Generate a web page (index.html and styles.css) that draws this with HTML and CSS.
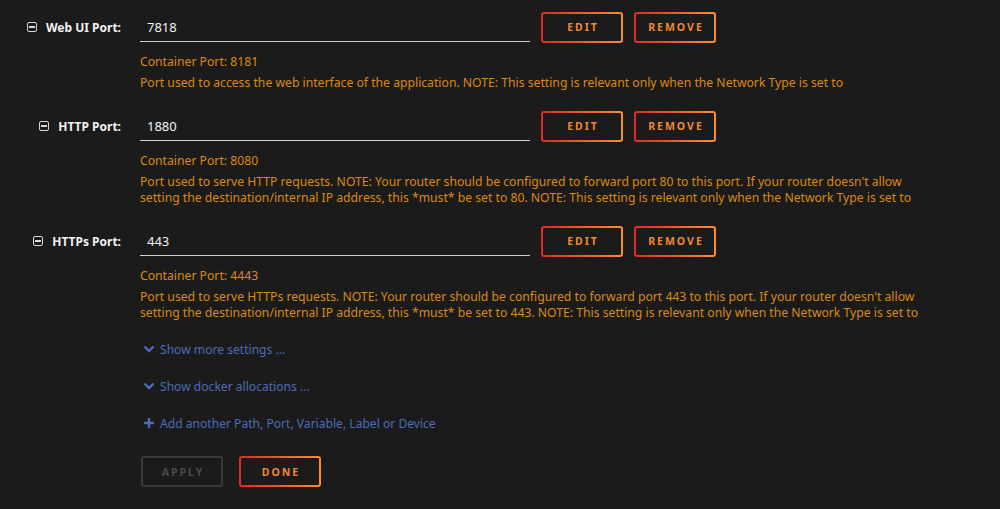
FILE: index.html
```html
<!DOCTYPE html>
<html>
<head>
<meta charset="utf-8">
<link rel="stylesheet" href="styles.css">
</head>
<body>
<div class="page">
  <div class="setting">
    <div class="line">
      <div class="label"><span class="minus"></span>Web UI Port:</div>
      <div class="field"><span class="value">7818</span></div>
      <div class="actions"><button class="btn">EDIT</button><button class="btn">REMOVE</button></div>
    </div>
    <div class="info">
      <div class="cport">Container Port: 8181</div>
      <div class="desc">Port used to access the web interface of the application. NOTE: This setting is relevant only when the Network Type is set to</div>
    </div>
  </div>
  <div class="setting">
    <div class="line">
      <div class="label"><span class="minus"></span>HTTP Port:</div>
      <div class="field"><span class="value">1880</span></div>
      <div class="actions"><button class="btn">EDIT</button><button class="btn">REMOVE</button></div>
    </div>
    <div class="info">
      <div class="cport">Container Port: 8080</div>
      <div class="desc">Port used to serve HTTP requests. NOTE: Your router should be configured to forward port 80 to this port. If your router doesn't allow<br>setting the destination/internal IP address, this *must* be set to 80. NOTE: This setting is relevant only when the Network Type is set to</div>
    </div>
  </div>
  <div class="setting">
    <div class="line">
      <div class="label"><span class="minus"></span>HTTPs Port:</div>
      <div class="field"><span class="value">443</span></div>
      <div class="actions"><button class="btn">EDIT</button><button class="btn">REMOVE</button></div>
    </div>
    <div class="info">
      <div class="cport">Container Port: 4443</div>
      <div class="desc">Port used to serve HTTPs requests. NOTE: Your router should be configured to forward port 443 to this port. If your router doesn't allow<br>setting the destination/internal IP address, this *must* be set to 443. NOTE: This setting is relevant only when the Network Type is set to</div>
    </div>
  </div>
  <div class="links">
    <a class="link"><svg class="ico" viewBox="0 0 12 12"><path d="M1.5 3.5 L6 8 L10.5 3.5" fill="none" stroke="currentColor" stroke-width="2.4"/></svg>Show more settings ...</a>
    <a class="link"><svg class="ico" viewBox="0 0 12 12"><path d="M1.5 3.5 L6 8 L10.5 3.5" fill="none" stroke="currentColor" stroke-width="2.4"/></svg>Show docker allocations ...</a>
    <a class="link"><svg class="ico" viewBox="0 0 12 12"><path d="M6 1 V11 M1 6 H11" fill="none" stroke="currentColor" stroke-width="2.4"/></svg>Add another Path, Port, Variable, Label or Device</a>
  </div>
  <div class="footer">
    <button class="btn disabled">APPLY</button>
    <button class="btn">DONE</button>
  </div>
</div>
</body>
</html>
```

FILE: styles.css
```css
html, body {
  margin: 0;
  padding: 0;
  background: #1c1b1b;
}
body {
  font-family: "Noto Sans", "Open Sans", sans-serif;
  font-size: 12px;
  color: #f2f2f2;
}
.page {
  padding-top: 12px;
}
.setting {
  margin-bottom: 20px;
}
.line {
  display: flex;
  align-items: center;
  height: 30px;
}
.label {
  flex: none;
  width: 121px;
  display: flex;
  justify-content: flex-end;
  align-items: center;
  gap: 9px;
  font-weight: bold;
  font-size: 12px;
  color: #f2f2f2;
}
.minus {
  width: 8px;
  height: 8px;
  border: 1.5px solid #d8d8d8;
  border-radius: 2px;
  position: relative;
  box-sizing: content-box;
  display: inline-block;
}
.minus::after {
  content: "";
  position: absolute;
  left: 1px;
  right: 1px;
  top: 3.25px;
  height: 1.5px;
  background: #d8d8d8;
}
.field {
  flex: none;
  margin-left: 19px;
  width: 390px;
  height: 30px;
  box-sizing: border-box;
  border-bottom: 1px solid #d0d0d0;
  display: flex;
  align-items: center;
  padding-left: 7px;
  font-size: 13px;
  color: #f2f2f2;
}
.actions {
  display: flex;
  gap: 11px;
  margin-left: 11px;
}
.btn {
  width: 82px;
  height: 31px;
  box-sizing: border-box;
  border: 2px solid transparent;
  border-radius: 3px;
  background:
    linear-gradient(#1c1b1b, #1c1b1b) padding-box,
    linear-gradient(90deg, #e22828, #ff8c2f) border-box;
  color: #f08a2e;
  font-family: "Noto Sans", sans-serif;
  font-weight: bold;
  font-size: 10.5px;
  letter-spacing: 2px;
  padding: 0 0 0 2px;
  cursor: pointer;
}
.btn.disabled {
  background: #1c1b1b;
  border-color: #3a3a3a;
  color: #4a4a4a;
}
.info {
  margin-left: 140px;
  color: #da8a10;
  font-size: 12.2px;
  line-height: 16px;
}
.cport {
  margin-top: 12px;
}
.desc {
  margin-top: 5px;
  white-space: nowrap;
}
.links {
  margin-left: 143px;
  display: flex;
  flex-direction: column;
  gap: 21px;
}
.link {
  display: flex;
  align-items: center;
  gap: 5px;
  height: 16px;
  color: #4a6db8;
  font-size: 12.1px;
}
.ico {
  width: 12px;
  height: 12px;
}
.footer {
  margin-top: 25px;
  margin-left: 141px;
  display: flex;
  gap: 16px;
}
```
